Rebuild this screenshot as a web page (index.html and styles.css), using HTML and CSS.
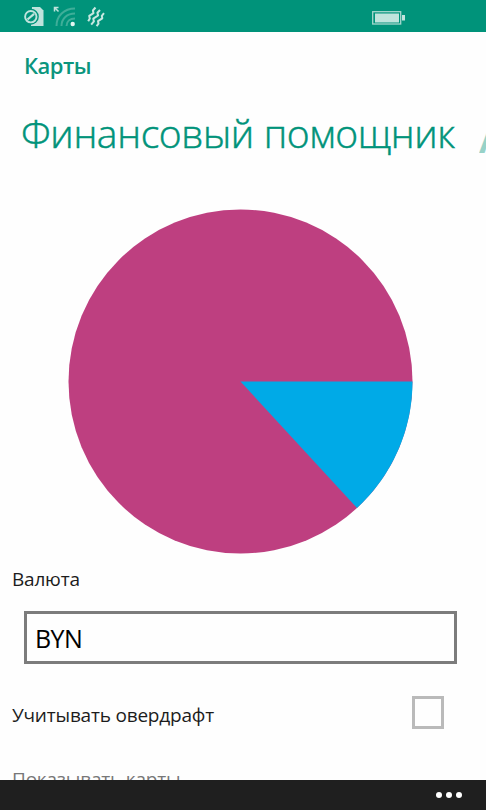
FILE: index.html
```html
<!DOCTYPE html>
<html lang="ru">
<head>
<meta charset="utf-8">
<title>Финансовый помощник</title>
<link rel="stylesheet" href="styles.css">
</head>
<body>
<div class="phone">
  <header class="status">
    <svg class="status-icons" width="90" height="32" viewBox="20 0 90 32" fill="none">
      <path d="M32 7h8l3.500 3.500V26H31z" fill="#bfe3dc"/>
      <circle cx="30.800" cy="16.700" r="8" fill="#00937a"/>
      <circle cx="30.800" cy="16.700" r="5.700" stroke="#bfe3dc" stroke-width="1.900"/>
      <path d="M27.500 19.500l6.600-5.600" stroke="#bfe3dc" stroke-width="2.200"/>
      <path d="M56.500 26C56.500 16 64 8.500 75 8.500M61.500 26C61.500 18.500 67 13.500 75 13.500M66.500 26C66.500 21.500 70 18.500 75 18.500" stroke="#3fae99" stroke-width="2"/>
      <circle cx="72.700" cy="24" r="2.200" fill="#e4f5f1"/>
      <path d="M58.500 11.500L55 8M54.500 11.500v-4h4" stroke="#bfe3dc" stroke-width="1.500"/>
      <g stroke="#c8e8e1" stroke-width="2" stroke-linejoin="round">
        <path d="M95.500 7.500l-2.600 3 .6 2.700-4.300 2.700.600 2.600-1.600 2.700"/>
        <path d="M100 10l-2.600 2.800.7 2.700-4.800 3.200.600 2.700-2.700 3.300"/>
        <path d="M104 13.200l-2.200 2.600.5 2.500-4.300 2.800.500 2.500-1.900 2.500"/>
      </g>
    </svg>
    <svg class="battery" width="34" height="32" viewBox="372 0 34 32">
      <rect x="372.700" y="11.700" width="28" height="12.300" fill="none" stroke="#a6d8ce" stroke-width="1.300"/>
      <rect x="375" y="13.500" width="24" height="9" fill="#c0e4dd"/>
      <rect x="402" y="15" width="3" height="5.500" fill="#c0e4dd"/>
    </svg>
  </header>
  <main class="page">
    <div class="app-name">Карты</div>
    <div class="pivot">
      <h1 class="pivot-title">Финансовый помощник</h1>
      <span class="pivot-next">А</span>
    </div>
    <svg class="chart" width="346" height="346" viewBox="-172.500 -173.500 346 346">
      <circle r="172" fill="#be3f80"/>
      <path d="M0 0H172A172 172 0 0 1 116.500 126.500Z" fill="#00aae7"/>
    </svg>
    <label class="label currency-label">Валюта</label>
    <div class="select">BYN</div>
    <div class="check-row">
      <span class="label overdraft">Учитывать овердрафт</span>
      <span class="checkbox"></span>
    </div>
    <div class="label more-cards">Показывать карты</div>
  </main>
  <footer class="app-bar">
    <span class="dot"></span><span class="dot"></span><span class="dot"></span>
  </footer>
</div>
</body>
</html>
```
FILE: styles.css
```css
* { box-sizing: border-box; }
body {
  margin: 0;
  background: #fefefe;
  font-family: "Open Sans", "Noto Sans", sans-serif;
}
.phone {
  width: 486px;
  height: 810px;
  overflow: hidden;
  display: flex;
  flex-direction: column;
}
.status {
  flex: none;
  height: 32px;
  padding-left: 20px;
  background: #00937a;
  display: flex;
}
.battery { margin-left: 262px; }
.page {
  flex: 1;
  min-height: 0;
  overflow: hidden;
  display: flex;
  flex-direction: column;
}
.app-name {
  flex: none;
  height: 30px;
  margin: 18px 0 0 24px;
  font-size: 22px;
  line-height: 30px;
  font-weight: 600;
  letter-spacing: -0.5px;
  color: #0b957d;
}
.pivot {
  flex: none;
  height: 60px;
  margin: 23px 0 0 21px;
  display: flex;
  overflow: hidden;
  white-space: nowrap;
  line-height: 60px;
  color: #00937a;
}
.pivot-title {
  flex: none;
  width: 458px;
  margin: 0;
  font-size: 39px;
  font-weight: 300;
  letter-spacing: -0.36px;
  -webkit-text-stroke: 0.5px #00937a;
}
.pivot-next {
  padding-top: 3px;
  font-size: 44px;
  font-weight: 600;
  opacity: 0.4;
}
.chart {
  flex: none;
  margin: 45px 0 0 68px;
}
.label {
  font-size: 19px;
  line-height: 26px;
  letter-spacing: -0.2px;
  color: #1c1c1c;
  white-space: nowrap;
}
.currency-label { margin: 12px 0 0 12px; }
.select {
  flex: none;
  width: 433px;
  height: 53px;
  margin: 19px 0 0 24px;
  padding-left: 8px;
  border: 3px solid #7c7c7c;
  font-size: 25px;
  line-height: 49px;
  letter-spacing: -0.6px;
  color: #000;
}
.check-row {
  flex: none;
  height: 33px;
  margin: 32px 42px 0 12px;
  display: flex;
  justify-content: space-between;
  align-items: center;
}
.overdraft { padding-top: 4px; }
.checkbox {
  width: 32px;
  height: 33px;
  border: 3px solid #bababa;
}
.more-cards {
  flex: none;
  margin: 37px 0 0 12px;
  color: #777;
}
.app-bar {
  flex: none;
  height: 30px;
  padding-right: 24px;
  background: #1f1f1f;
  display: flex;
  align-items: center;
  justify-content: flex-end;
  gap: 4px;
}
.dot {
  width: 6px;
  height: 6px;
  margin-bottom: 1px;
  border-radius: 50%;
  background: #fff;
}
```
